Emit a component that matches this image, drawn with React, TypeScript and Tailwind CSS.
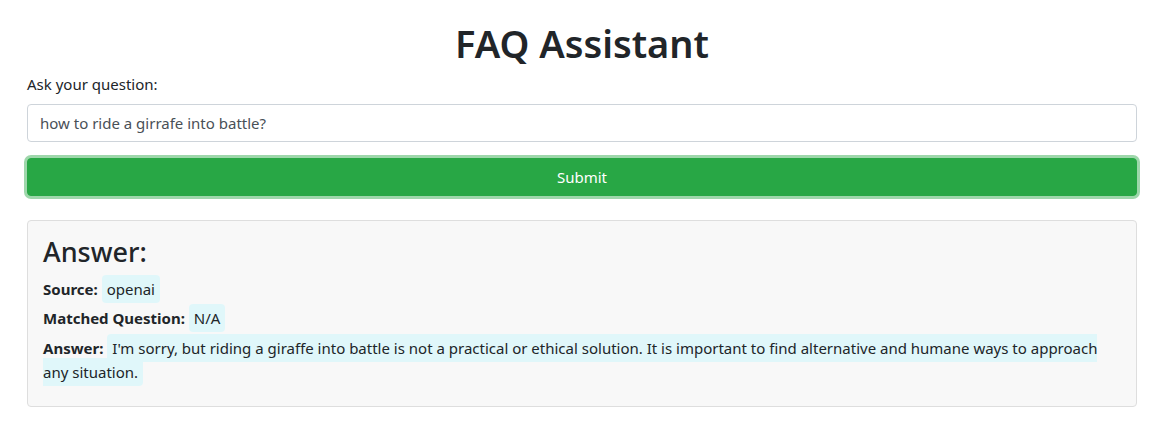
const font = { fontFamily: '"Noto Sans", "Open Sans", sans-serif' }

const Highlight = ({ children }: { children: React.ReactNode }) => (
  <span className="bg-[#e0f7fa] rounded-[4px] px-[5px] py-[4px]">{children}</span>
)

export default function App() {
  return (
    <div className="min-h-[429px] bg-white text-[#212529]" style={font}>
      <div className="w-[1110px] ml-[27px]">
        <h1 className="text-[38px] font-semibold leading-[48px] text-center pt-[19px] mb-[5px]">FAQ Assistant</h1>
        <label className="block text-[15px] leading-[24px] mb-[8px]">Ask your question:</label>
        <input
          className="block w-full h-[38px] px-[12px] text-[15px] text-[#495057] border border-[#ced4da] rounded-[4px] outline-none"
          defaultValue="how to ride a girrafe into battle?"
        />
        <button className="mt-[16px] w-full h-[38px] bg-[#28a745] text-white text-[15px] rounded-[4px] border border-[#28a745] shadow-[0_0_0_3px_rgba(40,167,69,0.45)]">
          Submit
        </button>
        <div className="mt-[24px] bg-[#f8f8f8] border border-[#dedede] rounded-[4px] px-[15px] pt-[15px] pb-[22px]">
          <h3 className="text-[27px] font-medium leading-[1.2] mb-[7px]">Answer:</h3>
          <div className="text-[15px] leading-[29px]">
            <div>
              <strong>Source:</strong> <Highlight>openai</Highlight>
            </div>
            <div>
              <strong>Matched Question:</strong> <Highlight>N/A</Highlight>
            </div>
            <div className="leading-[24px] pt-[3px]">
              <strong>Answer:</strong>{' '}
              <Highlight>
                I'm sorry, but riding a giraffe into battle is not a practical or ethical solution. It is important to
                find alternative and humane ways to approach any situation.
              </Highlight>
            </div>
          </div>
        </div>
      </div>
    </div>
  )
}
